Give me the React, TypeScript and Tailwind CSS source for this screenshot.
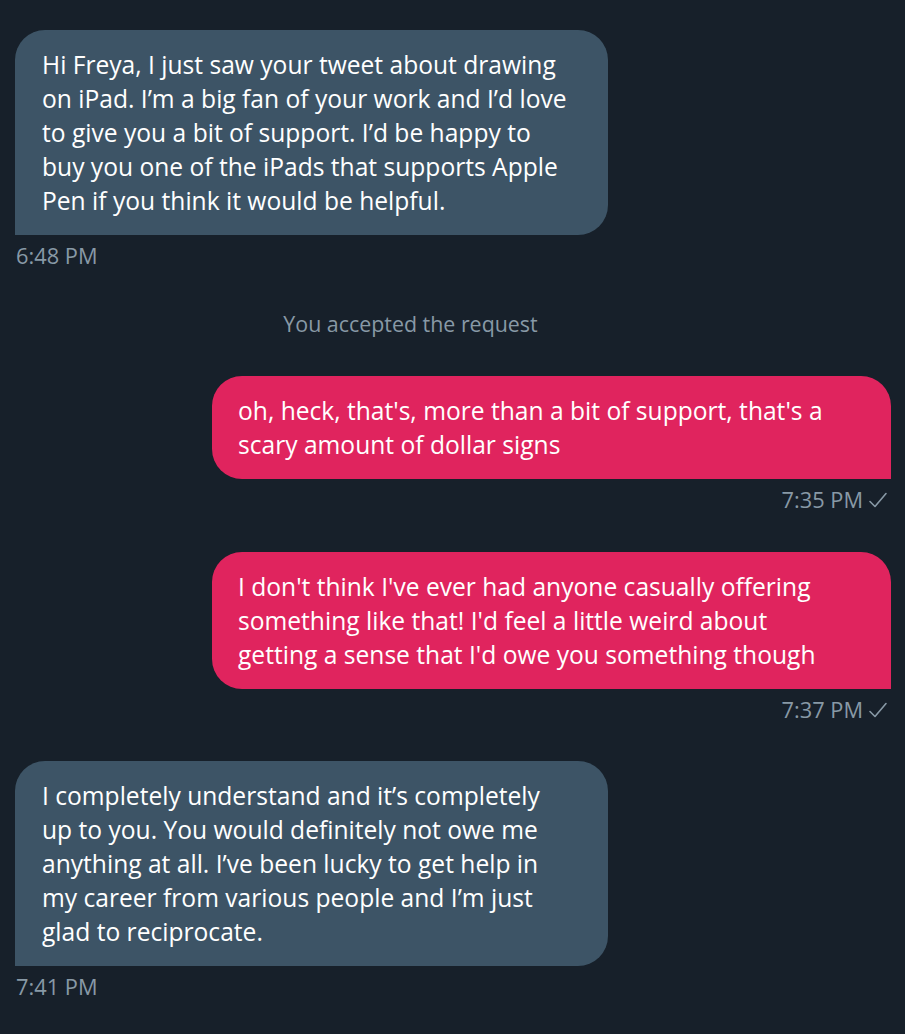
import React from "react";

const font = { fontFamily: '"Open Sans", "Noto Sans", sans-serif' };

function Check() {
  return (
    <svg width="20" height="18" viewBox="0 0 20 18" className="ml-[5px]" fill="none">
      <path d="M2 10.5 L7 15.5 L18 2.5" stroke="#8899a6" strokeWidth="1.6" strokeLinecap="round" strokeLinejoin="round" />
    </svg>
  );
}

function Received({ lines, time, mt }: { lines: string[]; time: string; mt: string }) {
  return (
    <div className={`flex flex-col items-start ${mt}`}>
      <div className="w-[593px] ml-[15px] bg-[#3d5466] rounded-t-[30px] rounded-br-[30px] rounded-bl-none pl-[27px] pr-[20px] pt-[18px] pb-[17px] text-white text-[24.6px] leading-[34px] whitespace-nowrap">
        {lines.map((l, i) => (
          <div key={i}>{l}</div>
        ))}
      </div>
      <div className="ml-[16px] mt-[8px] text-[#8899a6] text-[21.8px] leading-[26px]">{time}</div>
    </div>
  );
}

function Sent({ lines, time, mt }: { lines: string[]; time: string; mt: string }) {
  return (
    <div className={`flex flex-col items-end ${mt}`}>
      <div className="w-[679px] mr-[14px] bg-[#e0245e] rounded-t-[30px] rounded-bl-[30px] rounded-br-none pl-[26px] pr-[20px] pt-[18px] pb-[17px] text-white text-[24.6px] leading-[34px] whitespace-nowrap">
        {lines.map((l, i) => (
          <div key={i}>{l}</div>
        ))}
      </div>
      <div className="mr-[17px] mt-[8px] flex items-center text-[#8899a6] text-[21.8px] leading-[26px]">
        <span>{time}</span>
        <Check />
      </div>
    </div>
  );
}

export default function App() {
  return (
    <div style={font} className="w-[905px] h-[1034px] bg-[#17202a] pt-[30px] overflow-hidden">
      <Received
        mt="mt-0"
        time="6:48 PM"
        lines={[
          "Hi Freya, I just saw your tweet about drawing",
          "on iPad. I\u2019m a big fan of your work and I\u2019d love",
          "to give you a bit of support. I\u2019d be happy to",
          "buy you one of the iPads that supports Apple",
          "Pen if you think it would be helpful.",
        ]}
      />
      <div className="mt-[40px] text-center pr-[84px] text-[#8899a6] text-[21.4px] leading-[30px]">You accepted the request</div>
      <Sent
        mt="mt-[37px]"
        time="7:35 PM"
        lines={[
          "oh, heck, that's, more than a bit of support, that's a",
          "scary amount of dollar signs",
        ]}
      />
      <Sent
        mt="mt-[39px]"
        time="7:37 PM"
        lines={[
          "I don't think I've ever had anyone casually offering",
          "something like that! I'd feel a little weird about",
          "getting a sense that I'd owe you something though",
        ]}
      />
      <Received
        mt="mt-[38px]"
        time="7:41 PM"
        lines={[
          "I completely understand and it\u2019s completely",
          "up to you. You would definitely not owe me",
          "anything at all. I\u2019ve been lucky to get help in",
          "my career from various people and I\u2019m just",
          "glad to reciprocate.",
        ]}
      />
    </div>
  );
}
